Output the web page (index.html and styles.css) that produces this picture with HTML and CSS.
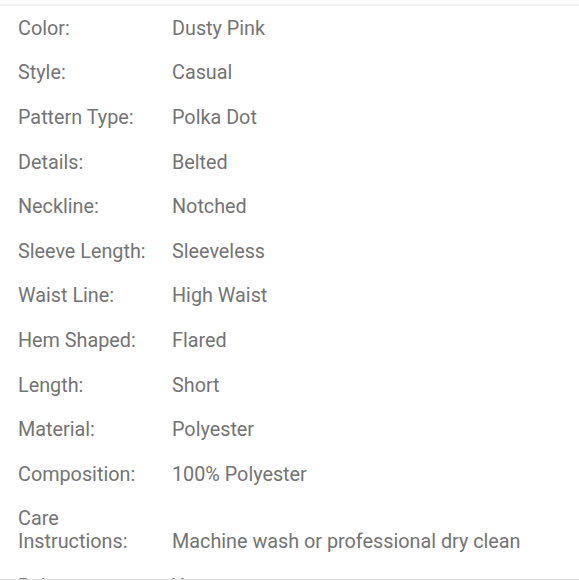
FILE: index.html
```html
<!DOCTYPE html>
<html>
<head>
<meta charset="utf-8">
<link rel="stylesheet" href="styles.css">
</head>
<body>
<div class="specs">
  <div class="row"><div class="label">Color:</div><div class="value">Dusty Pink</div></div>
  <div class="row"><div class="label">Style:</div><div class="value">Casual</div></div>
  <div class="row"><div class="label">Pattern Type:</div><div class="value">Polka Dot</div></div>
  <div class="row"><div class="label">Details:</div><div class="value">Belted</div></div>
  <div class="row"><div class="label">Neckline:</div><div class="value">Notched</div></div>
  <div class="row"><div class="label">Sleeve Length:</div><div class="value">Sleeveless</div></div>
  <div class="row"><div class="label">Waist Line:</div><div class="value">High Waist</div></div>
  <div class="row"><div class="label">Hem Shaped:</div><div class="value">Flared</div></div>
  <div class="row"><div class="label">Length:</div><div class="value">Short</div></div>
  <div class="row"><div class="label">Material:</div><div class="value">Polyester</div></div>
  <div class="row"><div class="label">Composition:</div><div class="value">100% Polyester</div></div>
  <div class="row"><div class="label">Care<br>Instructions:</div><div class="value">Machine wash or professional dry clean</div></div>
  <div class="row"><div class="label">Belt:</div><div class="value">Yes</div></div>
</div>
<div class="bottom-bar"></div>
</body>
</html>
```
FILE: styles.css
```css
html, body {
  margin: 0;
  padding: 0;
  background: #fff;
  overflow: hidden;
  height: 580px;
}
body {
  font-family: Roboto, "Liberation Sans", sans-serif;
  color: #747474;
  font-size: 19.8px;
  padding-top: 4px;
}
.specs {
  border-top: 2px solid #f3f3f3;
}
.row {
  display: grid;
  grid-template-columns: 154px 1fr;
  align-items: end;
  padding: 10.8px 0 10.8px 18px;
  line-height: 23px;
}
.bottom-bar {
  position: fixed;
  left: 0;
  right: 0;
  top: 579px;
  height: 20px;
  background: #fff;
  border-top: 1px solid #e0e0e0;
}
```
